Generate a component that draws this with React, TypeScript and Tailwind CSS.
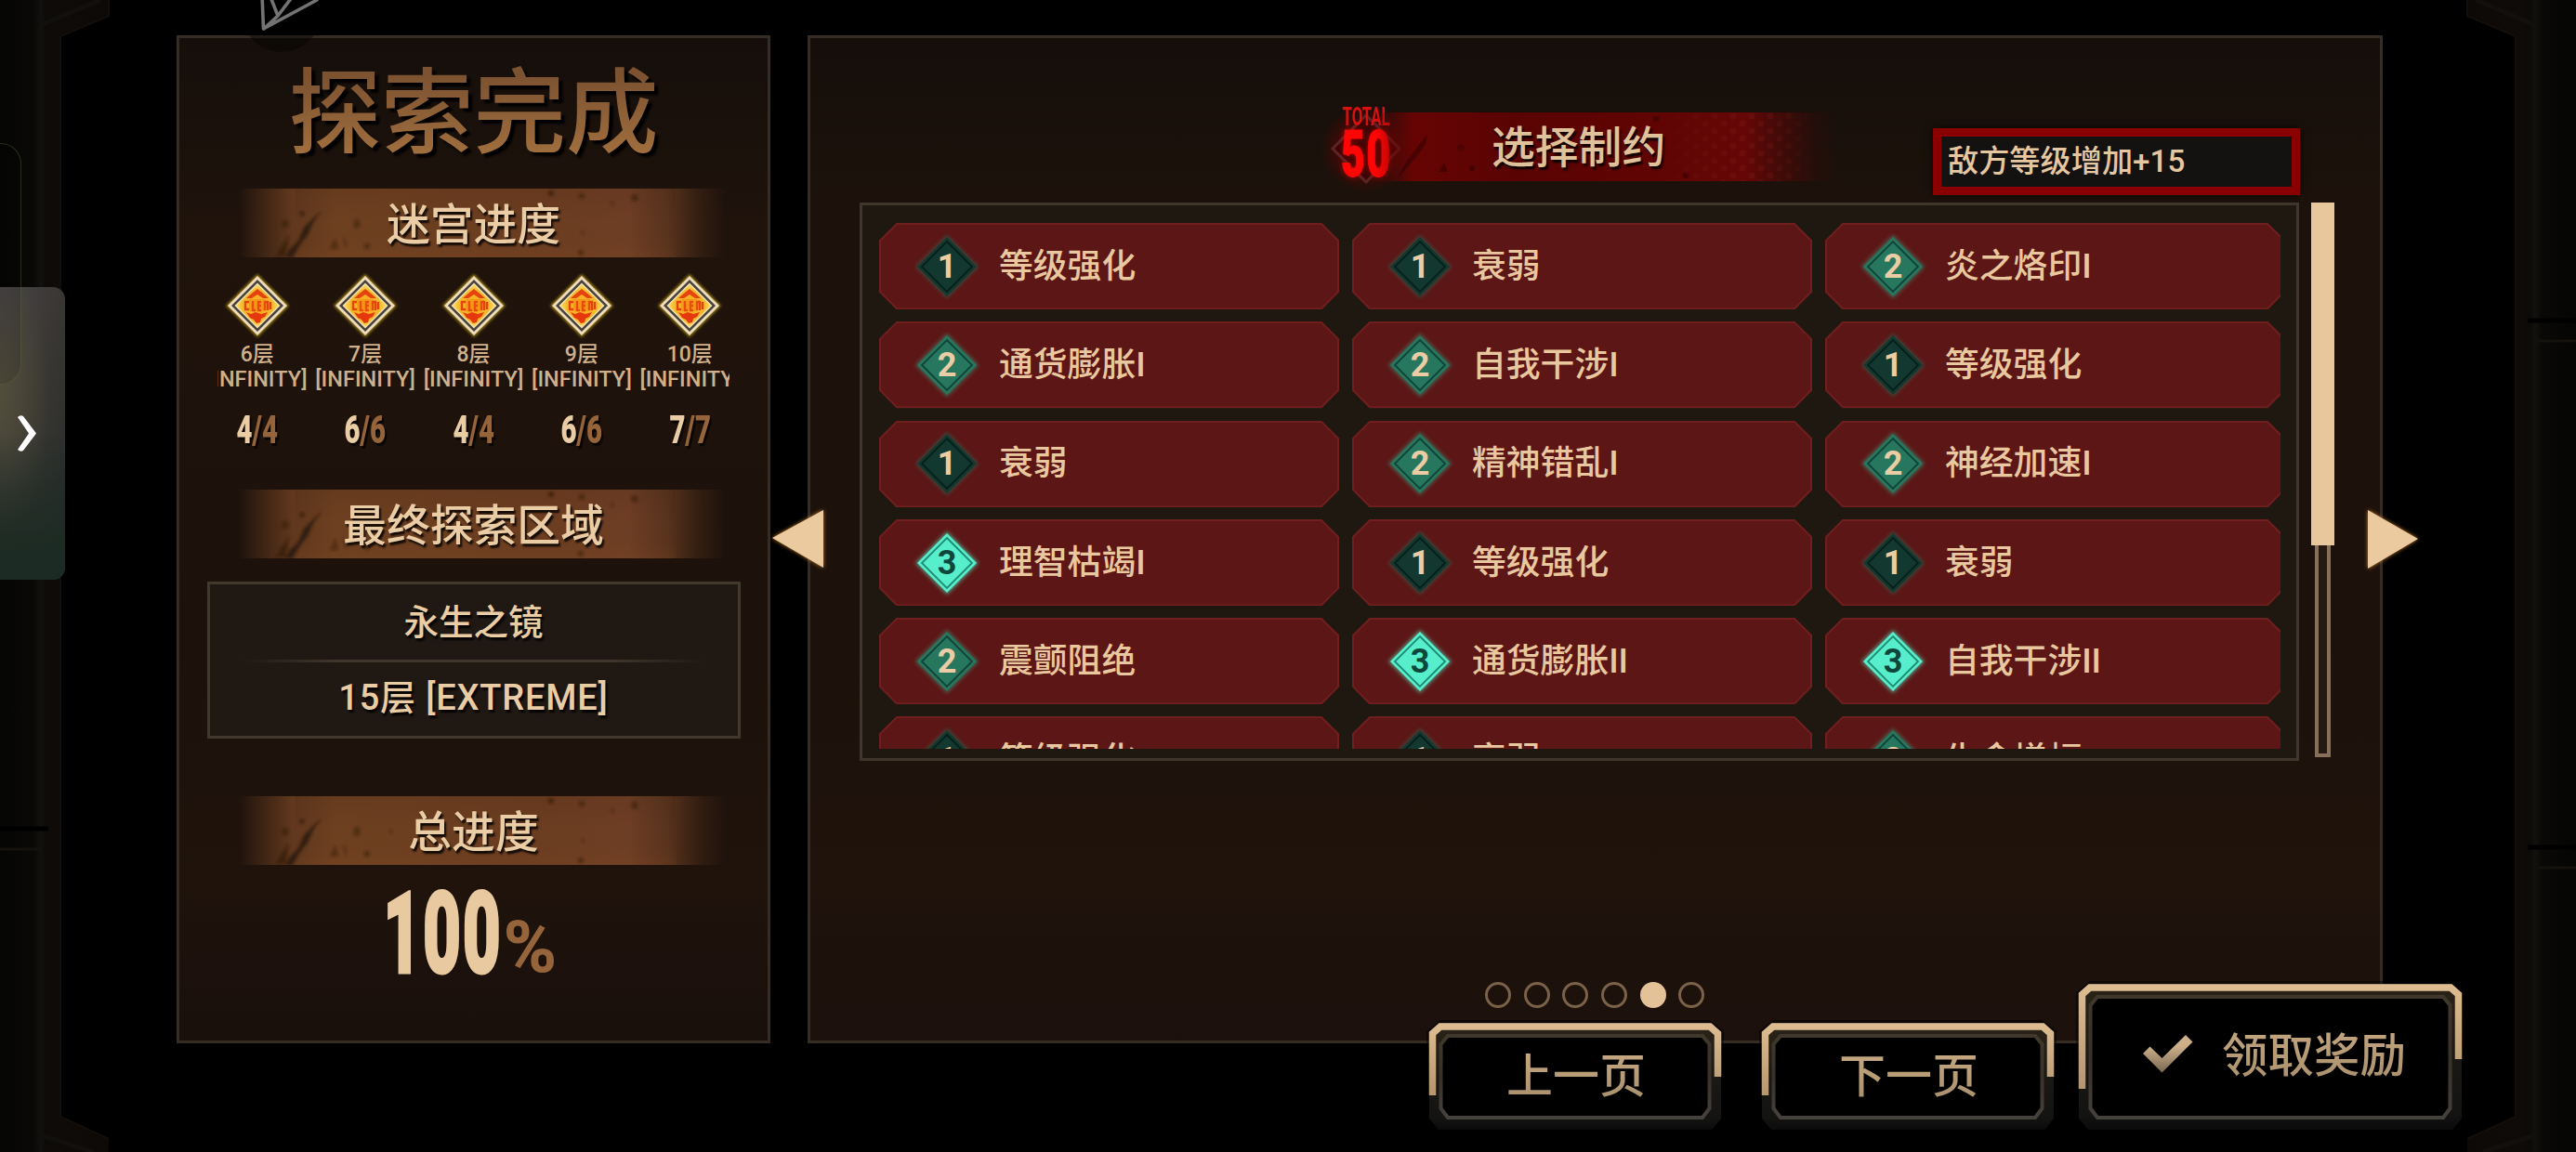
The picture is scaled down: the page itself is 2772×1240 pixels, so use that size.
import React from "react";

type Level = 1 | 2 | 3;

const CJK = "font-['Noto_Sans_CJK_SC','Noto_Sans',sans-serif]";
const LATIN = "font-['Roboto','Noto_Sans_CJK_SC',sans-serif]";

const floors = [
  { floor: "6层", done: 4, total: 4 },
  { floor: "7层", done: 6, total: 6 },
  { floor: "8层", done: 4, total: 4 },
  { floor: "9层", done: 6, total: 6 },
  { floor: "10层", done: 7, total: 7 },
];

const constraints: { level: Level; name: string }[] = [
  { level: 1, name: "等级强化" },
  { level: 1, name: "衰弱" },
  { level: 2, name: "炎之烙印I" },
  { level: 2, name: "通货膨胀I" },
  { level: 2, name: "自我干涉I" },
  { level: 1, name: "等级强化" },
  { level: 1, name: "衰弱" },
  { level: 2, name: "精神错乱I" },
  { level: 2, name: "神经加速I" },
  { level: 3, name: "理智枯竭I" },
  { level: 1, name: "等级强化" },
  { level: 1, name: "衰弱" },
  { level: 2, name: "震颤阻绝" },
  { level: 3, name: "通货膨胀II" },
  { level: 3, name: "自我干涉II" },
  { level: 1, name: "等级强化" },
  { level: 1, name: "衰弱" },
  { level: 2, name: "生命增幅" },
];

function SideFrame({ mirrored = false }: { mirrored?: boolean }) {
  const cut = mirrored ? [345, 912] : [345, 892];
  return (
    <svg
      className={
        mirrored
          ? "absolute right-0 top-0 h-[1240px] w-[120px] -scale-x-100"
          : "absolute left-0 top-0 h-[1240px] w-[120px]"
      }
      viewBox="0 0 120 1240"
    >
      <defs>
        <linearGradient id={mirrored ? "sfr" : "sfl"} x1="0" x2="1" y1="0" y2="0">
          <stop offset="0" stopColor="#050504" />
          <stop offset="0.32" stopColor="#0a0908" />
          <stop offset="0.37" stopColor="#13110e" />
          <stop offset="0.42" stopColor="#0c0b09" />
          <stop offset="0.52" stopColor="#0f0b08" />
          <stop offset="1" stopColor="#0c0907" />
        </linearGradient>
      </defs>
      <path
        d="M0 0H117V17L65 39V1202L117 1226V1240H0Z"
        fill={mirrored ? "url(#sfr)" : "url(#sfl)"}
      />
      <path d="M108 0L44 27V1222L100 1240" fill="none" stroke="#12100d" strokeWidth="5" />
      <path d="M117 0V17L65 39V1202L117 1226" fill="none" stroke="#130e0a" strokeWidth="2" />
      {cut.map((y) => (
        <g key={y}>
          <path d={`M0 ${y}H52`} stroke="#000" strokeWidth="5" />
          <path d={`M0 ${y + 22}H42`} stroke="#15110d" strokeWidth="3" />
        </g>
      ))}
    </svg>
  );
}

function PaperPlane() {
  return (
    <svg className="absolute left-[255px] top-0 h-[60px] w-[100px]" viewBox="0 0 100 60">
      <circle cx="48" cy="13" r="43" fill="#000" opacity="0.35" />
      <path
        d="M27 -6L28.500 31L86 0M35 -6L44 17L60 -4M44 17L29 31"
        fill="none"
        stroke="#737373"
        strokeWidth="3.600"
        strokeLinejoin="round"
        strokeLinecap="round"
      />
    </svg>
  );
}

function Drawer() {
  return (
    <div className="absolute left-0 top-[154px] h-[470px] w-[72px]">
      <div className="absolute left-0 top-[155px] flex h-[315px] w-[70px] items-center rounded-r-[13px] bg-[radial-gradient(ellipse_at_0%_36%,rgba(88,84,58,0.75),transparent_55%),linear-gradient(105deg,#46434a_0%,#3b3835_40%,#252a27_100%)]">
        <div className="absolute inset-0 rounded-r-[13px] bg-gradient-to-b from-transparent from-50% to-[#1c2b23] to-90%" />
        <svg className="relative ml-[19px] h-[39px] w-[20px]" viewBox="0 0 20 39">
          <path d="M0 2Q3 -1 6 1L20 19.500L6 38Q3 40 0 37L12 19.500Z" fill="#fff" />
        </svg>
      </div>
      <div className="absolute -left-[30px] top-0 h-[260px] w-[53px] rounded-[22px] border border-[#64783c]/35 bg-black/10" />
    </div>
  );
}

function BrushBanner({ children }: { children: React.ReactNode }) {
  return (
    <div className="relative ml-[64px] h-[74px] w-[524px] shrink-0 self-start">
      <svg className="absolute inset-0 h-full w-full" viewBox="0 0 524 74" preserveAspectRatio="none">
        <defs>
          <linearGradient id="bronze" x1="0" x2="1" y1="0" y2="0">
            <stop offset="0" stopColor="#6b3e20" stopOpacity="0" />
            <stop offset="0.03" stopColor="#6b3e20" stopOpacity="0.25" />
            <stop offset="0.11" stopColor="#6d3f21" stopOpacity="0.85" />
            <stop offset="0.2" stopColor="#6f4121" />
            <stop offset="0.6" stopColor="#6d3e21" />
            <stop offset="0.8" stopColor="#703f25" />
            <stop offset="0.88" stopColor="#653a21" stopOpacity="0.85" />
            <stop offset="0.95" stopColor="#5a341e" stopOpacity="0.3" />
            <stop offset="1" stopColor="#5a341e" stopOpacity="0" />
          </linearGradient>
          <linearGradient id="bronzeShade" x1="0" x2="0" y1="0" y2="1">
            <stop offset="0" stopColor="#1a0d05" stopOpacity="0.1" />
            <stop offset="0.5" stopColor="#1a0d05" stopOpacity="0.02" />
            <stop offset="1" stopColor="#8a4c22" stopOpacity="0.1" />
          </linearGradient>
          <filter id="soft">
            <feGaussianBlur stdDeviation="1.5" />
          </filter>
        </defs>
        <rect width="524" height="74" fill="url(#bronze)" />
        <rect x="60" width="410" height="74" fill="url(#bronzeShade)" />
        <g fill="#2a1509" filter="url(#soft)">
          <path d="M89 24L82 30L70 42L64 56L54 66L50 74H58L66 60L74 50L80 36Z" opacity="0.85" />
          <path d="M54 50L46 62L40 73H50L52 62Z" opacity="0.55" />
          <circle cx="68" cy="27" r="2.500" opacity="0.6" />
          <circle cx="50" cy="38" r="4" opacity="0.45" />
          <ellipse cx="127" cy="38" rx="4" ry="5" opacity="0.4" />
          <path d="M98 65L104 53L107 65ZM112 52L116 58L115 65Z" opacity="0.45" />
          <circle cx="138" cy="62" r="3" opacity="0.5" />
          <circle cx="336" cy="5" r="3" opacity="0.6" />
          <circle cx="369" cy="8" r="3" opacity="0.5" />
          <circle cx="426" cy="10" r="3.500" opacity="0.5" />
          <circle cx="402" cy="16" r="2" opacity="0.4" />
          <circle cx="368" cy="69" r="3" opacity="0.5" />
          <circle cx="370" cy="48" r="2" opacity="0.3" />
          <circle cx="164" cy="38" r="2" opacity="0.25" />
        </g>
      </svg>
      <div
        className={`${CJK} relative w-[505px] text-center text-[46.800px] leading-[69px] font-medium text-[#eacda5] [text-shadow:2px_3px_2px_rgba(0,0,0,0.85)]`}
      >
        {children}
      </div>
    </div>
  );
}

function FloorEmblem() {
  return (
    <svg className="h-[80px] w-[80px]" viewBox="-40 -40 80 80">
      <defs>
        <radialGradient id="gold">
          <stop offset="0" stopColor="#ffa51c" />
          <stop offset="0.7" stopColor="#f3b92c" />
          <stop offset="1" stopColor="#ffd95a" />
        </radialGradient>
        <filter id="halo" x="-30%" y="-30%" width="160%" height="160%">
          <feGaussianBlur stdDeviation="1.6" />
        </filter>
        <filter id="smudge" x="-20%" y="-20%" width="140%" height="140%">
          <feGaussianBlur stdDeviation="0.7" />
        </filter>
      </defs>
      <path d="M0 -34L34 0L0 34L-34 0Z" fill="#b8991a" opacity="0.8" filter="url(#halo)" />
      <path d="M0 -32L32 0L0 32L-32 0Z" fill="#efdcbc" />
      <path d="M0 -28L28 0L0 28L-28 0Z" fill="#45423c" />
      <path d="M0 -24.500L24.500 0L0 24.500L-24.500 0Z" fill="#f6e2ae" />
      <path d="M0 -22.500L22.500 0L0 22.500L-22.500 0Z" fill="url(#gold)" />
      <g filter="url(#smudge)">
        <path d="M-12 -8L-5 -14L0 -18L5 -14L12 -8L6 -8L0 -12L-6 -8Z" fill="#e6420c" />
        <path
          d="M-9 -4H-13V4H-9M-5 -5V5H-2M4 -4H1V5H4M1 0H4M8 5V-4H11V5M14 -4V4"
          fill="none"
          stroke="#e6420c"
          strokeWidth="2.400"
        />
        <path d="M-12 7L-7 9L-2 7L4 9L11 7L8 12L4 14L3 18L-1 19L-4 15L-8 13Z" fill="#e6380a" />
        <path d="M-9 -7H9V6H-9Z" fill="#f06a12" opacity="0.3" />
      </g>
    </svg>
  );
}

function LevelDiamond({ level }: { level: Level }) {
  const tone = {
    1: { fill: "#12382f", line: "#061f1b", glow: "#2a6b5a", text: "text-[#eacda5]" },
    2: { fill: "#27775f", line: "#0f4338", glow: "#3b9a7e", text: "text-[#eacda5]" },
    3: { fill: "#57efcb", line: "#1f8a74", glow: "#57efcb", text: "text-[#0f463b]" },
  }[level];
  return (
    <div className="relative flex h-[76px] w-[76px] items-center justify-center">
      <svg className="absolute inset-0 h-full w-full" viewBox="-38 -38 76 76">
        <defs>
          <filter id={`glow${level}`} x="-30%" y="-30%" width="160%" height="160%">
            <feGaussianBlur stdDeviation="2" />
          </filter>
        </defs>
        <path d="M0 -34L34 0L0 34L-34 0Z" fill={tone.glow} opacity="0.6" filter={`url(#glow${level})`} />
        <path d="M0 -32L32 0L0 32L-32 0Z" fill={tone.fill} />
        <path d="M0 -27L27 0L0 27L-27 0Z" fill="none" stroke={tone.line} strokeWidth="1.800" />
      </svg>
      <span className={`${LATIN} relative text-[36px] leading-none font-bold ${tone.text}`}>{level}</span>
    </div>
  );
}

function ConstraintCard({ level, name }: { level: Level; name: string }) {
  return (
    <div className="relative flex w-[495px] items-center pl-[35px]">
      <svg className="absolute inset-0 h-full w-full" viewBox="0 0 495 93.3" preserveAspectRatio="none">
        <path
          d="M19 1H476L494 19V74L476 92.300H19L1 74V19Z"
          fill="#5c1615"
          stroke="#6e1f1e"
          strokeWidth="2"
        />
      </svg>
      <LevelDiamond level={level} />
      <span
        className={`${LATIN} relative ml-[18px] text-[36.800px] leading-[60px] font-medium whitespace-nowrap text-[#e9c79f]`}
      >
        {name}
      </span>
    </div>
  );
}

function TotalBadge() {
  return (
    <div className="relative mt-[67px] flex h-[92px] w-[96px] shrink-0 flex-col items-center self-start">
      <svg className="absolute inset-0 h-full w-full overflow-visible" viewBox="-48 -46 96 92">
        <defs>
          <radialGradient id="redGlow">
            <stop offset="0" stopColor="#b00000" stopOpacity="0.75" />
            <stop offset="0.6" stopColor="#7a0000" stopOpacity="0.4" />
            <stop offset="1" stopColor="#600000" stopOpacity="0" />
          </radialGradient>
        </defs>
        <ellipse cx="0" cy="6" rx="50" ry="48" fill="url(#redGlow)" />
        <path d="M0 -30L36 6L0 42L-36 6Z" fill="#3a0505" stroke="#5e2424" strokeWidth="3" />
      </svg>
      <span className="relative mt-[7px] origin-center scale-x-[0.62] font-['Roboto',sans-serif] text-[27px] leading-[22px] font-bold text-[#d81010]">
        TOTAL
      </span>
      <span className="relative origin-center scale-x-[0.63] font-['Roboto',sans-serif] text-[71px] leading-[57px] font-black tracking-[2px] text-[#ff0505] [-webkit-text-stroke:1px_#ff0505] [text-shadow:0_0_8px_rgba(255,0,0,0.6)]">
        50
      </span>
    </div>
  );
}

function RedBanner() {
  return (
    <div className="relative mt-[80px] -ml-[38px] h-[74px] w-[500px] shrink-0 self-start">
      <svg className="absolute inset-0 h-full w-full" viewBox="0 0 500 74">
        <defs>
          <linearGradient id="redBand" x1="0" x2="1" y1="0" y2="0">
            <stop offset="0" stopColor="#6a0303" stopOpacity="0" />
            <stop offset="0.08" stopColor="#6a0303" stopOpacity="0.95" />
            <stop offset="0.3" stopColor="#590403" />
            <stop offset="0.6" stopColor="#600403" />
            <stop offset="0.8" stopColor="#640706" />
            <stop offset="0.9" stopColor="#480908" stopOpacity="0.6" />
            <stop offset="1" stopColor="#2a0c08" stopOpacity="0" />
          </linearGradient>
          <linearGradient id="dotFade" x1="0" x2="1" y1="0" y2="0">
            <stop offset="0.62" stopColor="#fff" stopOpacity="0" />
            <stop offset="0.8" stopColor="#fff" />
            <stop offset="0.95" stopColor="#fff" stopOpacity="0" />
          </linearGradient>
          <pattern id="halftone" width="20" height="16" patternUnits="userSpaceOnUse">
            <circle cx="5" cy="4" r="3.500" fill="#7c1b18" />
            <circle cx="15" cy="12" r="3.500" fill="#7c1b18" />
          </pattern>
          <mask id="dotMask">
            <rect width="500" height="74" fill="url(#dotFade)" />
          </mask>
        </defs>
        <rect width="500" height="74" fill="url(#redBand)" />
        <rect width="500" height="74" fill="url(#halftone)" mask="url(#dotMask)" opacity="0.4" />
        <g fill="#2a0302" opacity="0.5">
          <path d="M56 24L46 36L34 52L24 70L34 60L44 48L54 34Z" />
          <circle cx="92" cy="38" r="4" opacity="0.6" />
          <path d="M68 64L74 54L78 64Z" />
          <circle cx="104" cy="60" r="3" />
          <circle cx="302" cy="7" r="3" />
          <circle cx="334" cy="68" r="3" />
        </g>
      </svg>
      <div
        className={`${CJK} relative ml-[125px] text-[46.800px] leading-[68px] font-medium whitespace-nowrap text-[#dfc19a] [text-shadow:2px_3px_2px_rgba(0,0,0,0.85)]`}
      >
        选择制约
      </div>
    </div>
  );
}

function FrameButton({
  id,
  w,
  h,
  leftEnd,
  rightEnd,
  children,
}: {
  id: string;
  w: number;
  h: number;
  leftEnd: number;
  rightEnd: number;
  children: React.ReactNode;
}) {
  return (
    <button
      className={`${CJK} relative flex shrink-0 text-[50px] font-medium`}
      style={{ width: w, height: h }}
    >
      <svg className="absolute inset-0 h-full w-full overflow-visible" viewBox={`0 0 ${w} ${h}`}>
        <defs>
          <linearGradient id={id} gradientUnits="userSpaceOnUse" x1="0" x2="0" y1="0" y2={leftEnd}>
            <stop offset="0" stopColor="#dfbd92" />
            <stop offset="1" stopColor="#b6966f" />
          </linearGradient>
          <linearGradient id={`${id}-base`} x1="0" x2="0" y1="0" y2="1">
            <stop offset="0" stopColor="#2b2317" />
            <stop offset="0.5" stopColor="#1b1916" />
            <stop offset="0.9" stopColor="#131312" />
            <stop offset="1" stopColor="#0b0b0b" />
          </linearGradient>
          <linearGradient id={`${id}-in`} x1="0" x2="0" y1="0" y2="1">
            <stop offset="0" stopColor="#3f382b" />
            <stop offset="0.5" stopColor="#3a3129" />
            <stop offset="1" stopColor="#45413c" />
          </linearGradient>
        </defs>
        <path
          d={`M12 -3H${w - 12}L${w + 3} 9V${h - 10}L${w - 12} ${h + 2}H12L-3 ${h - 10}V9Z`}
          fill="#000"
          opacity="0.5"
        />
        <path
          d={`M10 0H${w - 10}L${w} 10V${h - 12}L${w - 10} ${h}H10L0 ${h - 12}V10Z`}
          fill={`url(#${id}-base)`}
        />
        <path
          d={`M20 14H${w - 20}L${w - 12.5} 23V${h - 23}L${w - 20} ${h - 13}H20L12.5 ${h - 23}V23Z`}
          fill="#000"
          stroke={`url(#${id}-in)`}
          strokeWidth="4"
        />
        <path
          d={`M3.5 ${leftEnd}V11.5L12 4H${w - 12}L${w - 3.5} 11.5V${rightEnd}`}
          fill="none"
          stroke={`url(#${id})`}
          strokeWidth="7.500"
        />
      </svg>
      {children}
    </button>
  );
}

const goldText = "bg-gradient-to-b from-[#d8b88f] to-[#97805f] bg-clip-text text-transparent";

export default function App() {
  return (
    <div className="relative h-[1240px] w-[2772px] overflow-hidden bg-black">
      <SideFrame />
      <SideFrame mirrored />

      <main className="relative flex gap-[40px] pt-[38px] pl-[190px]">
        <section className="flex h-[1085px] w-[639px] flex-col items-center border-[3px] border-[#352c24] bg-[linear-gradient(180deg,#150e0a_0%,#1f130c_18%,#1d120b_60%,#1f130c_85%,#190f0b_100%)]">
          <h1
            className={`${CJK} h-[162px] bg-gradient-to-b from-[#7c5230] from-25% to-[#a2703f] to-80% bg-clip-text text-[99.500px] leading-[146px] font-medium text-transparent [filter:drop-shadow(4px_4px_1px_#000)]`}
          >
            探索完成
          </h1>
          <BrushBanner>迷宫进度</BrushBanner>

          <div className="flex h-[250px] w-[551px] shrink-0 justify-center overflow-hidden">
            {floors.map((f) => (
              <div
                key={f.floor}
                className={`${LATIN} flex w-[116.400px] shrink-0 flex-col items-center pt-[12px] text-[#cfb08a]`}
              >
                <FloorEmblem />
                <span className="text-[23px] leading-[26px] font-medium">{f.floor}</span>
                <span className="text-[23.500px] leading-[26px] font-medium whitespace-nowrap">[INFINITY]</span>
                <span className="mt-[22px] scale-x-[0.7] text-[42px] leading-[40px] font-black whitespace-nowrap text-[#eacda5] [text-shadow:3px_3px_1px_rgba(0,0,0,0.7)]">
                  {f.done}
                  <span className="text-[#95643a]">/{f.total}</span>
                </span>
              </div>
            ))}
          </div>

          <BrushBanner>最终探索区域</BrushBanner>

          <div
            className={`${LATIN} mt-[25px] mb-[62px] flex h-[169px] w-[574px] shrink-0 flex-col items-center border-3 border-[#43382c] bg-[#1f1813] text-[37.500px] font-medium whitespace-nowrap text-[#eacda5] [text-shadow:2px_3px_2px_rgba(0,0,0,0.85)]`}
          >
            <div className="h-[81px] leading-[83px]">永生之镜</div>
            <div className="h-[3px] w-[500px] shrink-0 bg-[linear-gradient(90deg,transparent,#3f352b_20%,#3f352b_80%,transparent)]" />
            <div className="text-[38px] leading-[77px] tracking-[0.800px]">15层 [EXTREME]</div>
          </div>

          <BrushBanner>总进度</BrushBanner>

          <div className="mt-[29px] flex h-[90px] items-end justify-center font-['Roboto',sans-serif]">
            <div className="flex w-[122px] justify-center">
              <span className="scale-x-[0.575] text-[123px] leading-[89px] font-black tracking-[3px] text-[#e9caa0] [-webkit-text-stroke:3px_#e9caa0]">
                100
              </span>
            </div>
            <div className="flex w-[66px] justify-center">
              <span className="text-[78px] leading-[61px] font-extrabold text-[#95643a]">%</span>
            </div>
          </div>
        </section>

        <section className="flex h-[1085px] w-[1695px] flex-col border-[3px] border-[#352c24] bg-[linear-gradient(180deg,#150e0a_0%,#1d120b_18%,#1d120b_60%,#1f130c_85%,#1b100b_100%)]">
          <header className="flex h-[177px] shrink-0 pl-[550px]">
            <TotalBadge />
            <RedBanner />
            <div
              className={`${LATIN} mt-[97px] ml-[100px] h-[72px] w-[395px] shrink-0 self-start border-[9px] border-[#8a0000] bg-[#131211] pl-[7px] text-[33.200px] leading-[54px] font-medium whitespace-nowrap text-[#e6c7a0] [box-shadow:0_0_8px_rgba(0,0,0,0.7)]`}
            >
              敌方等级增加+15
            </div>
          </header>

          <div className="flex gap-[13px] pl-[53px]">
            <div className="h-[601px] w-[1549px] shrink-0 border-3 border-[#40362b] bg-[#1f1811] pt-[19px] pl-[18px]">
              <div className="grid h-[566px] w-[1508px] auto-rows-[93.300px] grid-cols-[495px_495px_495px] gap-x-[14px] gap-y-[13px] overflow-hidden">
                {constraints.map((c, i) => (
                  <ConstraintCard key={i} level={c.level} name={c.name} />
                ))}
              </div>
            </div>
            <div className="flex h-[597px] w-[25px] flex-col items-center">
              <div className="h-[369px] w-full bg-[#e8c79c]" />
              <div className="w-[17px] flex-1 border-[4px] border-t-0 border-[#86705a] bg-[#241a12]" />
            </div>
          </div>

          <div className="mt-[238px] ml-[726px] flex gap-[13.700px]">
            {[0, 1, 2, 3, 4, 5].map((i) => (
              <span
                key={i}
                className={
                  i === 4
                    ? "h-[28px] w-[28px] rounded-full bg-[#e4c297]"
                    : "h-[28px] w-[28px] rounded-full border-[3px] border-[#7a6249]"
                }
              />
            ))}
          </div>
        </section>
      </main>

      <svg className="absolute left-[829px] top-[545px] h-[70px] w-[62px] [filter:drop-shadow(0_0_2px_#c07a30)]" viewBox="0 0 62 70">
        <path d="M2 34L57 4V66Z" fill="#ebcaa0" />
      </svg>
      <svg className="absolute left-[2544px] top-[545px] h-[70px] w-[62px] [filter:drop-shadow(0_0_2px_#c07a30)]" viewBox="0 0 62 70">
        <path d="M58 35L4 4V67Z" fill="#ebcaa0" />
      </svg>

      <div className="absolute top-[1059px] left-[1538px] flex h-[157px] items-end">
        <FrameButton id="prev" w={314} h={115} leftEnd={78} rightEnd={58}>
          <span className={`relative w-full pl-[2px] text-center leading-[107px] ${goldText}`}>上一页</span>
        </FrameButton>
        <div className="w-[44px]" />
        <FrameButton id="next" w={314} h={115} leftEnd={78} rightEnd={58}>
          <span className={`relative w-full pl-[2px] text-center leading-[107px] ${goldText}`}>下一页</span>
        </FrameButton>
        <div className="w-[27px]" />
        <FrameButton id="claim" w={412} h={157} leftEnd={113} rightEnd={81}>
          <svg className="relative mt-[54px] ml-[69px] h-[42px] w-[54px]" viewBox="0 0 54 42">
            <defs>
              <linearGradient id="tick" x1="0" x2="0" y1="0" y2="1">
                <stop offset="0.3" stopColor="#cdb08a" />
                <stop offset="1" stopColor="#7a6852" />
              </linearGradient>
            </defs>
            <path d="M0 21L7.500 13.500L20.500 26L46 1L53.500 8.500L20.500 41.500Z" fill="url(#tick)" />
          </svg>
          <span className={`relative ml-[31px] h-[150px] whitespace-nowrap text-[49.500px] leading-[148px] ${goldText}`}>
            领取奖励
          </span>
        </FrameButton>
      </div>

      <PaperPlane />
      <Drawer />
    </div>
  );
}
